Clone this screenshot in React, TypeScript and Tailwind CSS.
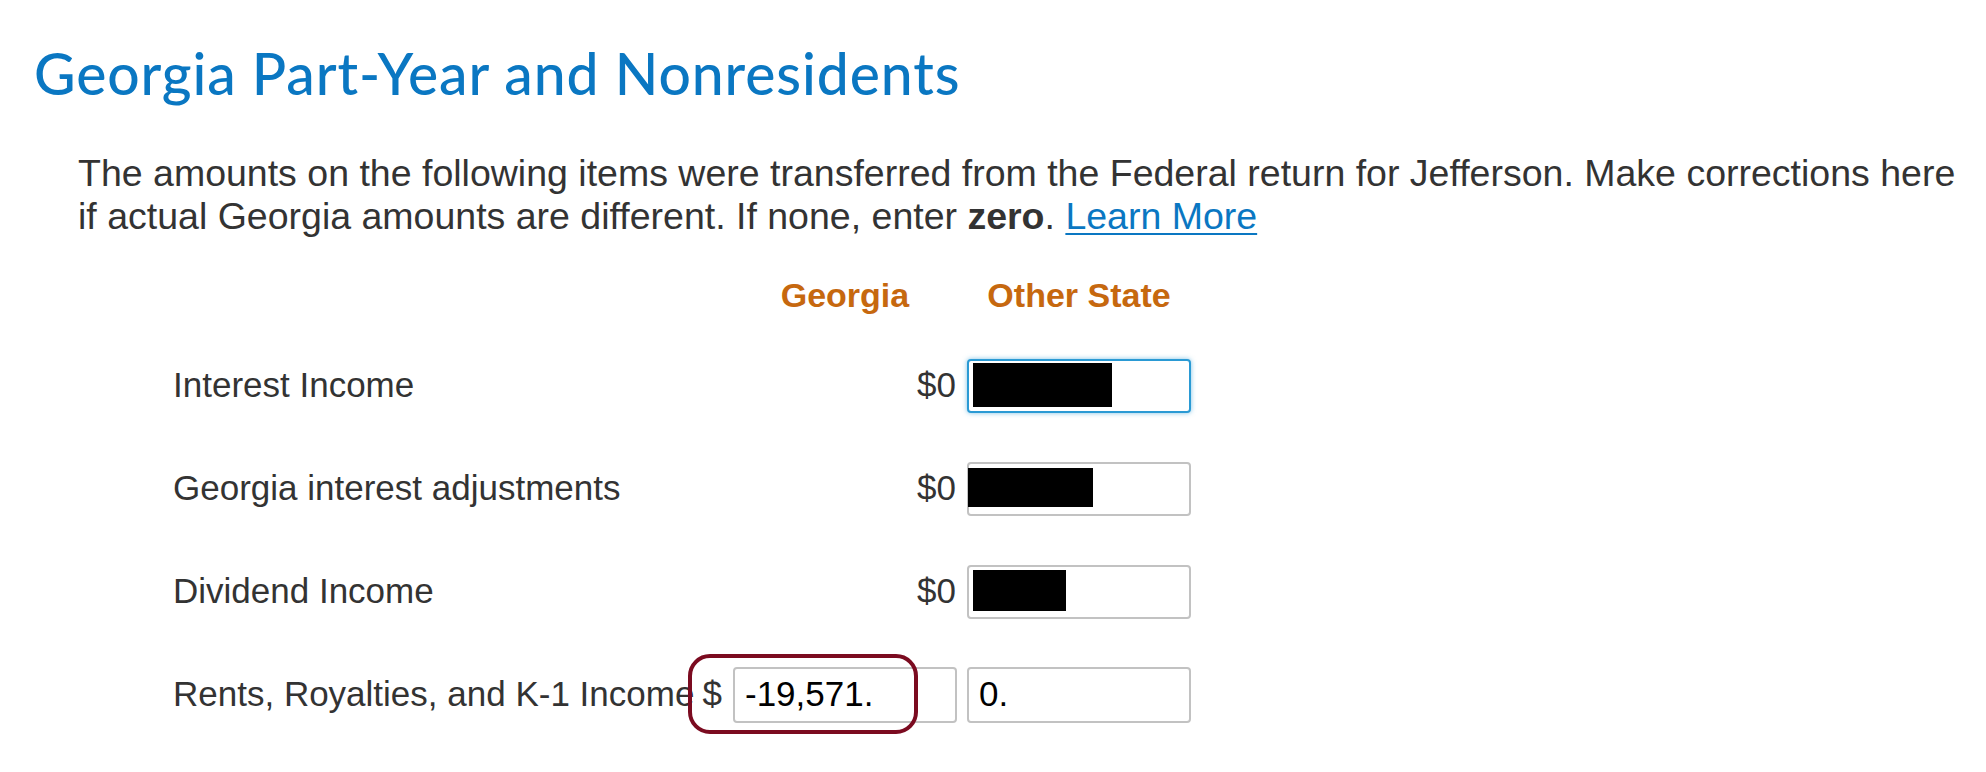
import React from 'react';

type Row = {
  label: string;
  georgia: string | null;
  redact?: { ml: string; mt: string; w: string; h: string };
  other?: string;
  focused?: boolean;
};

const rows: Row[] = [
  { label: 'Interest Income', georgia: '$0', focused: true, redact: { ml: 'ml-[4px]', mt: 'mt-[2px]', w: 'w-[139px]', h: 'h-[44px]' } },
  { label: 'Georgia interest adjustments', georgia: '$0', redact: { ml: 'ml-[-1px]', mt: 'mt-[4px]', w: 'w-[125px]', h: 'h-[39px]' } },
  { label: 'Dividend Income', georgia: '$0', redact: { ml: 'ml-[4px]', mt: 'mt-[3px]', w: 'w-[93px]', h: 'h-[41px]' } },
];

function OtherBox({ row }: { row: Row }) {
  const border = row.focused
    ? 'border-[#2a9ad4] shadow-[0_0_5px_rgba(42,154,212,0.6)]'
    : 'border-[#c2c2c2]';
  return (
    <div className={`w-[224px] h-[54px] border-2 rounded-[4px] bg-white flex items-start ${border}`}>
      {row.redact && (
        <div className={`bg-black ${row.redact.ml} ${row.redact.mt} ${row.redact.w} ${row.redact.h}`} />
      )}
    </div>
  );
}

export default function App() {
  return (
    <div className="w-[1986px] h-[772px] bg-white overflow-hidden font-['Liberation_Sans',Arial,sans-serif] text-[#333]">
      <h1 className="ml-[34px] mt-[39px] font-['Lato',sans-serif] font-medium text-[57px] leading-[68px] tracking-[0.9px] text-[#0a77c2] whitespace-nowrap">
        Georgia Part-Year and Nonresidents
      </h1>

      <p className="ml-[78px] mt-[45px] text-[37.5px] leading-[43px] whitespace-nowrap">
        The amounts on the following items were transferred from the Federal return for Jefferson. Make corrections here
        <br />
        if actual Georgia amounts are different. If none, enter <b className="font-bold">zero</b>.{' '}
        <a href="#" className="text-[#0a77c2] underline underline-offset-[4px] decoration-2">
          Learn More
        </a>
      </p>

      <div className="ml-[173px] mt-[37px] grid grid-cols-[512px_262px_224px] gap-x-[10px]">
        <div />
        <div className="flex justify-end">
          <div className="w-[224px] text-center text-[34px] leading-[40px] font-bold text-[#c6680f]">Georgia</div>
        </div>
        <div className="text-center text-[34px] leading-[40px] font-bold text-[#c6680f]">Other State</div>
      </div>

      <div className="ml-[173px] mt-[19px] grid grid-cols-[512px_262px_224px] gap-x-[10px] text-[35px]">
        {rows.map((row) => (
          <React.Fragment key={row.label}>
            <div className="h-[103px] flex items-center whitespace-nowrap">{row.label}</div>
            <div className="h-[103px] flex items-center justify-end pr-[1px]">{row.georgia}</div>
            <div className="h-[103px] flex items-center">
              <OtherBox row={row} />
            </div>
          </React.Fragment>
        ))}

        <div className="h-[103px] flex items-center whitespace-nowrap">Rents, Royalties, and K-1 Income</div>
        <div className="h-[103px] flex items-center justify-end relative">
          <span className="mr-[11px]">$</span>
          <div className="w-[224px] h-[56px] border-2 border-[#c2c2c2] rounded-[4px] bg-white flex items-center pl-[10px] text-black">
            -19,571.
          </div>
          <div className="absolute left-[-7px] top-[11px] w-[230px] h-[80px] border-[4px] border-[#7b0b20] rounded-[22px] pointer-events-none" />
        </div>
        <div className="h-[103px] flex items-center">
          <div className="w-[224px] h-[56px] border-2 border-[#c2c2c2] rounded-[4px] bg-white flex items-center pl-[10px] text-black">
            0.
          </div>
        </div>
      </div>
    </div>
  );
}
